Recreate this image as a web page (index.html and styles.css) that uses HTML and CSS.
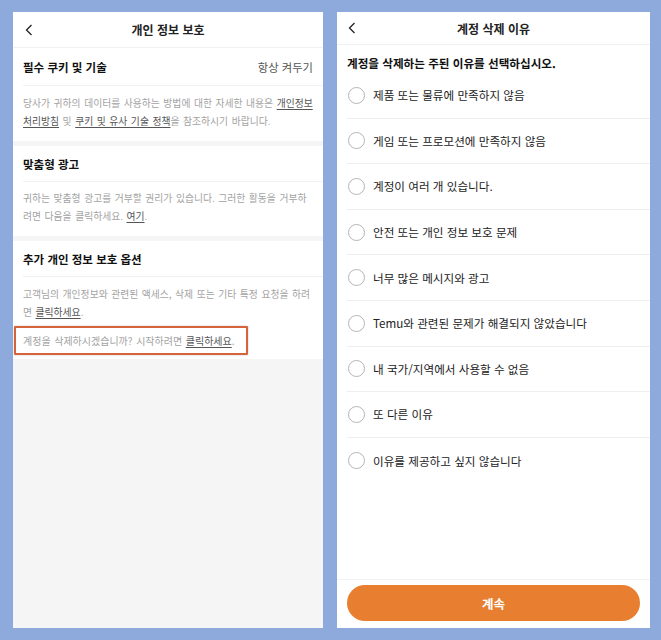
FILE: index.html
```html
<!DOCTYPE html>
<html lang="ko">
<head>
<meta charset="utf-8">
<link rel="stylesheet" href="styles.css">
</head>
<body>
<div class="stage">
  <section class="panel left">
    <header class="topbar">
      <svg class="back" width="8" height="12" viewBox="0 0 8 12"><path d="M6.5 1 L1.5 6 L6.5 11" fill="none" stroke="#222" stroke-width="1.3"/></svg>
      <h1 class="title">개인 정보 보호</h1>
    </header>
    <div class="block">
      <div class="row-head split"><span class="head">필수 쿠키 및 기술</span><span class="aside">항상 켜두기</span></div>
      <p class="desc">당사가 귀하의 데이터를 사용하는 방법에 대한 자세한 내용은 <u>개인정보 처리방침</u> 및 <u>쿠키 및 유사 기술 정책</u>을 참조하시기 바랍니다.</p>
    </div>
    <div class="band"></div>
    <div class="block">
      <div class="row-head"><span class="head">맞춤형 광고</span></div>
      <p class="desc d2">귀하는 맞춤형 광고를 거부할 권리가 있습니다. 그러한 활동을 거부하려면 다음을 클릭하세요. <u>여기</u>.</p>
    </div>
    <div class="band"></div>
    <div class="block last">
      <div class="row-head"><span class="head">추가 개인 정보 보호 옵션</span></div>
      <p class="desc d3">고객님의 개인정보와 관련된 액세스, 삭제 또는 기타 특정 요청을 하려면 <u>클릭하세요</u>.</p>
      <div class="redbox"><span class="desc-inline">계정을 삭제하시겠습니까? 시작하려면 <u>클릭하세요</u>.</span></div>
    </div>
  </section>

  <section class="panel right">
    <header class="topbar r">
      <svg class="back" width="8" height="12" viewBox="0 0 8 12"><path d="M6.5 1 L1.5 6 L6.5 11" fill="none" stroke="#222" stroke-width="1.3"/></svg>
      <h1 class="title">계정 삭제 이유</h1>
    </header>
    <div class="content">
      <h2 class="question">계정을 삭제하는 주된 이유를 선택하십시오.</h2>
      <ul class="options">
        <li><span class="radio"></span>제품 또는 물류에 만족하지 않음</li>
        <li><span class="radio"></span>게임 또는 프로모션에 만족하지 않음</li>
        <li><span class="radio"></span>계정이 여러 개 있습니다.</li>
        <li><span class="radio"></span>안전 또는 개인 정보 보호 문제</li>
        <li><span class="radio"></span>너무 많은 메시지와 광고</li>
        <li><span class="radio"></span>Temu와 관련된 문제가 해결되지 않았습니다</li>
        <li><span class="radio"></span>내 국가/지역에서 사용할 수 없음</li>
        <li><span class="radio"></span>또 다른 이유</li>
        <li><span class="radio"></span>이유를 제공하고 싶지 않습니다</li>
      </ul>
    </div>
    <footer class="footer"><button class="cta">계속</button></footer>
  </section>
</div>
</body>
</html>
```

FILE: styles.css
```css
* { box-sizing: border-box; margin: 0; padding: 0; }
html, body { width: 661px; height: 640px; overflow: hidden; }
body {
  background: #8eaadc;
  font-family: "Noto Sans CJK KR", "Noto Sans", sans-serif;
  color: #222;
}
.stage {
  display: flex;
  gap: 14px;
  padding: 12px 0 0 13px;
}
.panel {
  height: 616px;
  display: flex;
  flex-direction: column;
}
.left { width: 310px; background: #f5f5f5; }
.right { width: 313px; background: #fff; }

.topbar {
  height: 36px;
  background: #fff;
  border-bottom: 1px solid #f1f1f1;
  display: flex;
  align-items: center;
  justify-content: center;
  position: relative;
}
.topbar.r { height: 33px; }
.back { position: absolute; left: 12px; top: 12px; }
.topbar.r .back { left: 11px; top: 10px; }
.title { font-size: 12px; font-weight: 700; letter-spacing: 0; }

.block { background: #fff; }
.block.last { padding-bottom: 4px; }
.row-head {
  margin-left: 10px;
  padding-right: 10px;
  height: 38px;
  border-bottom: 1px solid #f1f1f1;
  display: flex;
  align-items: center;
}
.row-head.split { justify-content: space-between; }
.block + .band + .block .row-head { height: 36px; }
.head { font-size: 11.5px; font-weight: 700; color: #111; }
.aside { font-size: 11.3px; color: #555; }
.desc {
  font-size: 9.8px;
  line-height: 17.5px;
  word-spacing: 0.8px;
  color: #a3a3a3;
  padding: 9px 10px 11px 10px;
}
.desc.d2 { padding-top: 8px; }
.desc.d3 { padding-bottom: 0; }
.desc u, .desc-inline u { color: #555; text-underline-offset: 2px; }
.band { height: 5px; background: #f5f5f5; }

.redbox {
  margin: 5px 0 0 1px;
  width: 234px;
  height: 29px;
  border: 2px solid #d5633c;
  border-radius: 1px;
  box-shadow: 0 0 2px rgba(0,0,0,0.25);
  display: flex;
  align-items: center;
  padding-left: 7px;
}
.desc-inline { font-size: 10px; word-spacing: 0.8px; color: #a3a3a3; }

.content { flex: 1; }
.question {
  font-size: 11.6px;
  font-weight: 700;
  line-height: 20px;
  margin: 8px 0 0 10px;
  color: #111;
}
.options { list-style: none; }
.options li {
  margin-left: 10px;
  height: 45.6px;
  border-bottom: 1px solid #eeeeee;
  display: flex;
  align-items: center;
  font-size: 11.6px;
  color: #222;
}
.options li:last-child { border-bottom: none; }
.radio {
  width: 17px;
  height: 17px;
  border: 1px solid #b5b5b5;
  border-radius: 50%;
  margin: 0 8px 0 1px;
  flex: none;
}
.footer {
  border-top: 1px solid #f3f3f3;
  padding: 5px 10px 7px 10px;
}
.cta {
  width: 100%;
  height: 36px;
  border: none;
  border-radius: 18px;
  background: #e87f30;
  color: #fff;
  font-family: "Noto Sans CJK KR", sans-serif;
  font-size: 12.5px;
  font-weight: 700;
}
```
